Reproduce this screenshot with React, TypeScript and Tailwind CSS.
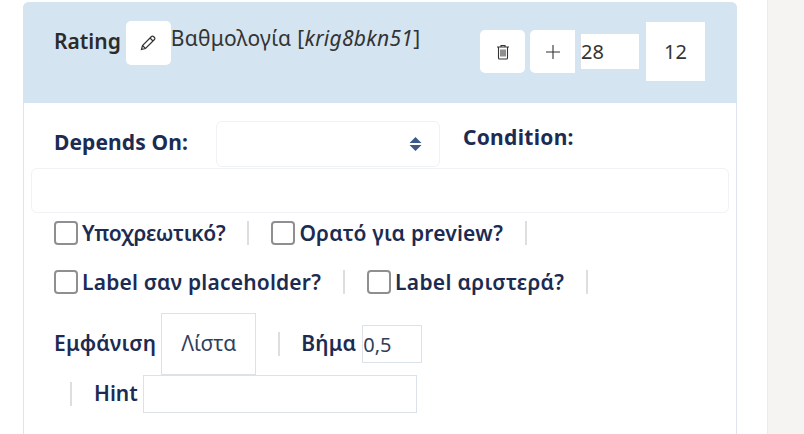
import React from 'react';

const font = { fontFamily: '"Noto Sans", sans-serif' };

const Sep: React.FC<{ className?: string }> = ({ className }) => <span className={`h-6 w-[2px] bg-[#dedede] shrink-0 ${className}`} />;

const Check: React.FC<{ label: string; className?: string }> = ({ label, className }) => (
    <label className="flex items-center gap-[4px]">
        <input type="checkbox" className="appearance-none w-6 h-6 bg-white border-2 border-[#8f8f8f] rounded-[4px]" />
        <span className={`text-[21px] leading-6 font-semibold text-[#1c2b52] whitespace-nowrap ${className}`}>{label}</span>
    </label>
);

const App: React.FC = () => {
    return (
        <div style={font} className="flex h-[434px] w-[804px] overflow-hidden bg-white">
            <div className="w-[767px] pl-[23px] pt-[2px] shrink-0">
                <div className="w-[714px] h-[440px] border-x border-[#dfe5ee] rounded-t-[6px]">
                    <div className="relative flex h-[101px] -mx-px pl-[31px] bg-[#d4e4f0] rounded-t-[6px]">
                        <span className="mt-[25px] h-7 leading-7 text-[21px] font-semibold text-[#2b2b2b]">Rating</span>
                        <button className="ml-[5px] mt-[19px] w-[45px] h-[44px] bg-white rounded-[5px] flex items-center justify-center">
                            <svg width="16" height="16" viewBox="0 0 16 16" fill="none" stroke="#333" strokeWidth="1.2"><path d="M1.5 14.5l1-4L11.5 1.5a1.4 1.4 0 0 1 2 0l1 1a1.4 1.4 0 0 1 0 2L5.5 13.5z" /><path d="M10 3l3 3M2.5 10.5l3 3" /></svg>
                        </button>
                        <span className="mt-[22px] h-7 leading-7 text-[21px] tracking-[0.3px] text-[#333] whitespace-nowrap">Βαθμολογία [<i>krig8bkn51</i>]</span>
                        <div className="absolute left-[457px] top-[19px] flex items-center gap-[5px]">
                            <button className="w-[45px] h-[43px] bg-white rounded-[5px] flex items-center justify-center">
                                <svg width="14" height="16" viewBox="0 0 14 16" fill="none" stroke="#333" strokeWidth="1.1"><path d="M1 3h12M5 3V1.5h4V3M2.5 3v11a1 1 0 0 0 1 1h7a1 1 0 0 0 1-1V3" /><path d="M5 5.5v7M7 5.5v7M9 5.5v7" /></svg>
                            </button>
                            <button className="w-[45px] h-[43px] bg-white rounded-l-[5px] flex items-center justify-center">
                                <svg width="16" height="16" viewBox="0 0 16 16" fill="none" stroke="#333" strokeWidth="1.1"><path d="M8 1v14M1 8h14" /></svg>
                            </button>
                            <input readOnly value="28" className="w-[60px] h-[37px] bg-white border border-[#dbe2ea] px-0 text-[20px] text-[#333] outline-none" />
                            <input readOnly value="12" className="w-[61px] h-[61px] bg-white border border-[#dbe2ea] text-center text-[20px] text-[#333] outline-none" />
                        </div>
                    </div>

                    <div className="flex pl-[30px] h-[65px]">
                        <span className="mt-[25px] h-7 leading-7 text-[21px] tracking-[0.1px] font-bold text-[#1c2b52]">Depends On:</span>
                        <div className="ml-[28px] mt-[18px] w-[224px] h-[46px] bg-white border border-[#f0f2f5] rounded-[6px] flex items-center justify-end pr-[17px]">
                            <svg width="13" height="16" viewBox="0 0 13 16" fill="#3c5a85"><path d="M6.5 1L12.5 7H.5zM6.5 15L.5 9H12.5z" /></svg>
                        </div>
                        <span className="ml-[23px] mt-[20px] h-7 leading-7 text-[21px] tracking-[0.3px] font-bold text-[#1c2b52]">Condition:</span>
                    </div>

                    <div className="ml-[7px] w-[698px] h-[45px] bg-white border border-[#f0f2f5] rounded-[6px]" />

                    <div className="flex items-center mt-[8px] ml-[30px] h-6">
                        <Check label="Υποχρεωτικό?" className="tracking-[-0.3px]" />
                        <Sep className="ml-[22px] mr-[22px]" />
                        <Check label="Ορατό για preview?" className="tracking-[0.2px]" />
                        <Sep className="ml-[22px]" />
                    </div>

                    <div className="flex items-center mt-[25px] ml-[30px] h-6">
                        <Check label="Label σαν placeholder?" className="tracking-[0.2px]" />
                        <Sep className="ml-[22px] mr-[22px]" />
                        <Check label="Label αριστερά?" className="tracking-[0.3px]" />
                        <Sep className="ml-[22px]" />
                    </div>

                    <div className="flex items-center mt-[19px] ml-[30px] h-[62px]">
                        <span className="text-[21px] tracking-[0.2px] font-semibold text-[#1c2b52]">Εμφάνιση</span>
                        <div className="ml-[5px] w-[95px] h-[62px] border border-[#dbe2ea] flex items-center justify-center text-[21px] text-[#2f3e5c]">Λίστα</div>
                        <Sep className="ml-[22px]" />
                        <span className="ml-[21px] text-[21px] tracking-[0.2px] font-semibold text-[#1c2b52]">Βήμα</span>
                        <input readOnly value="0,5" className="ml-[6px] w-[60px] h-[38px] border border-[#dbe2ea] px-0 text-[20px] text-[#2f3e5c] outline-none" />
                    </div>

                    <div className="flex items-center ml-[46px] h-[38px]">
                        <Sep />
                        <span className="ml-[22px] text-[21px] font-semibold text-[#1c2b52]">Hint</span>
                        <input readOnly className="ml-[5px] w-[274px] h-[38px] border border-[#dbe2ea] outline-none" />
                    </div>
                </div>
            </div>
            <div className="flex-1 bg-[#f5f4f2] border-l border-[#ebebeb]" />
        </div>
    );
};

export default App;
